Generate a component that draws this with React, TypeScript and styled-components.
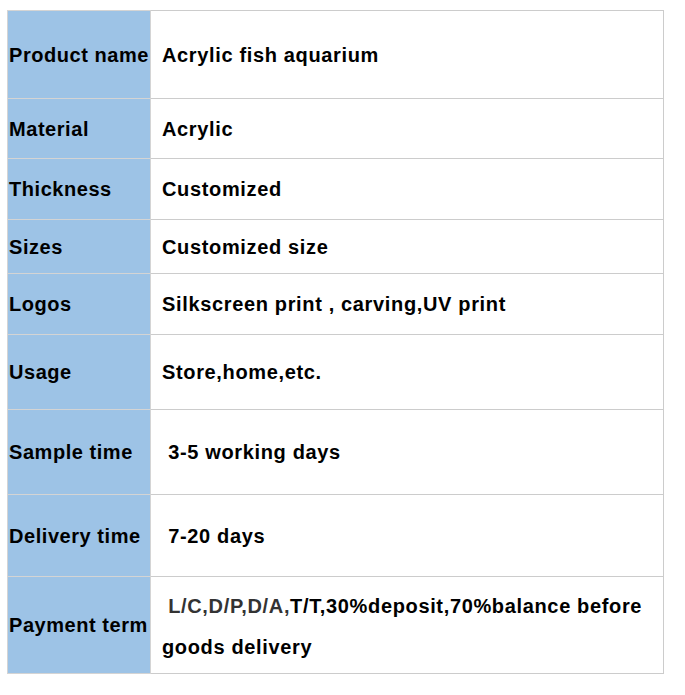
import React from 'react';
import styled, { createGlobalStyle } from 'styled-components';

const rows = [
  { label: 'Product name', value: 'Acrylic fish aquarium', height: 88 },
  { label: 'Material', value: 'Acrylic', height: 60 },
  { label: 'Thickness', value: 'Customized', height: 61 },
  { label: 'Sizes', value: 'Customized size', height: 54 },
  { label: 'Logos', value: 'Silkscreen print , carving,UV print', height: 61 },
  { label: 'Usage', value: 'Store,home,etc.', height: 75 },
  { label: 'Sample time', value: '\u00a03-5 working days', height: 85 },
  { label: 'Delivery time', value: '\u00a07-20 days', height: 82 },
];

function App() {
  return (
    <Page>
      <GlobalStyle />
      <Table>
        <colgroup>
          <col width={143} />
          <col width={513} />
        </colgroup>
        <tbody>
          {rows.map((row) => (
            <Row key={row.label} $height={row.height}>
              <LabelCell>{row.label}</LabelCell>
              <ValueCell>{row.value}</ValueCell>
            </Row>
          ))}
          <Row $height={97}>
            <LabelCell>Payment term</LabelCell>
            <ValueCell $tall>
              <Muted>{'\u00a0L/C,D/P,D/A,'}</Muted>T/T,30%deposit,70%balance before goods delivery
            </ValueCell>
          </Row>
        </tbody>
      </Table>
    </Page>
  );
}

const GlobalStyle = createGlobalStyle`
  body {
    margin: 0;
    background: #ffffff;
  }
`;

const Page = styled.div`
  padding: 10px 0 0 7px;
  font-family: 'Liberation Sans', Arial, sans-serif;
`;

const Table = styled.table`
  border-collapse: collapse;
  table-layout: fixed;
  width: 657px;
  border: 1px solid #cccccc;
`;

const Row = styled.tr<{ $height: number }>`
  height: ${(props) => props.$height}px;
`;

const LabelCell = styled.td`
  background-color: #9dc3e6;
  border: 1px solid #d4d4d4;
  padding: 1px 0 0 1px;
  font-size: 20px;
  font-weight: bold;
  letter-spacing: 0.55px;
  color: #000000;
  white-space: nowrap;
  vertical-align: middle;
`;

const ValueCell = styled.td<{ $tall?: boolean }>`
  border: 1px solid #cccccc;
  padding: ${(props) => (props.$tall ? '4px 8px 0 11px' : '1px 8px 0 11px')};
  font-size: 20px;
  font-weight: bold;
  letter-spacing: 0.65px;
  line-height: ${(props) => (props.$tall ? '41px' : 'normal')};
  color: #000000;
  vertical-align: middle;
`;

const Muted = styled.span`
  color: #333333;
`;

export default App;
